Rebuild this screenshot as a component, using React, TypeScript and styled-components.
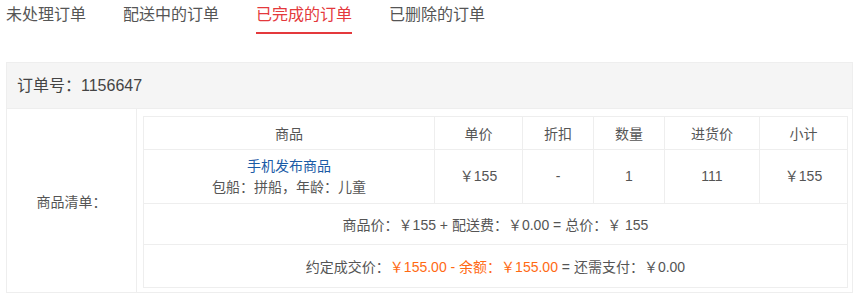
import React, { useState } from "react";
import styled, { createGlobalStyle } from "styled-components";

const GlobalStyle = createGlobalStyle`
  body {
    margin: 0;
    background: #fff;
    font-family: "Liberation Sans", "Noto Sans CJK SC", sans-serif;
    color: #555;
  }
`;

const tabs = ["未处理订单", "配送中的订单", "已完成的订单", "已删除的订单"];

const columns = [
  { title: "商品", width: 291 },
  { title: "单价", width: 88 },
  { title: "折扣", width: 71 },
  { title: "数量", width: 71 },
  { title: "进货价", width: 95 },
  { title: "小计", width: 88 },
];

const App = () => {
  const [active, setActive] = useState(2);

  return (
    <Page>
      <GlobalStyle />
      <TabBar>
        {tabs.map((t, i) => (
          <Tab key={t} $active={i === active} onClick={() => setActive(i)}>
            {t}
          </Tab>
        ))}
      </TabBar>

      <OrderPanel>
        <OrderHeader>订单号：1156647</OrderHeader>
        <OrderBody>
          <Label>商品清单：</Label>
          <TableWrap>
            <GoodsTable>
              <colgroup>
                {columns.map((c) => (
                  <col key={c.title} style={{ width: c.width }} />
                ))}
              </colgroup>
              <thead>
                <tr>
                  {columns.map((c) => (
                    <Th key={c.title}>{c.title}</Th>
                  ))}
                </tr>
              </thead>
              <tbody>
                <ProductRow>
                  <Td>
                    <ProductName href="#">手机发布商品</ProductName>
                    <Spec>包船：拼船，年龄：儿童</Spec>
                  </Td>
                  <Td>￥155</Td>
                  <Td>-</Td>
                  <Td>1</Td>
                  <Td>111</Td>
                  <Td>￥155</Td>
                </ProductRow>
                <SummaryRow>
                  <Td colSpan={6}>
                    商品价：￥155 + 配送费：￥0.00 = 总价：￥ 155
                  </Td>
                </SummaryRow>
                <PayRow>
                  <Td colSpan={6}>
                    约定成交价：<Highlight>￥155.00 - 余额：￥155.00</Highlight> = 还需支付：￥0.00
                  </Td>
                </PayRow>
              </tbody>
            </GoodsTable>
          </TableWrap>
        </OrderBody>
      </OrderPanel>
    </Page>
  );
};

const Page = styled.div`
  width: 859px;
  height: 297px;
  overflow: hidden;
`;

const TabBar = styled.div`
  display: flex;
  gap: 37px;
  padding-left: 6px;
`;

const Tab = styled.div<{ $active: boolean }>`
  font-size: 16px;
  line-height: 22px;
  padding: 4px 0 6px;
  color: ${(p) => (p.$active ? "#e4393c" : "#555")};
  border-bottom: 2px solid ${(p) => (p.$active ? "#e4393c" : "transparent")};
  cursor: pointer;
`;

const OrderPanel = styled.div`
  margin: 28px 6px 0;
  border: 1px solid #eee;
`;

const OrderHeader = styled.div`
  height: 45px;
  line-height: 45px;
  background: #f5f5f5;
  padding-left: 10px;
  font-size: 16px;
  color: #444;
  border-bottom: 1px solid #eee;
`;

const OrderBody = styled.div`
  display: flex;
`;

const Label = styled.div`
  width: 129px;
  flex-shrink: 0;
  display: flex;
  align-items: center;
  justify-content: center;
  font-size: 14px;
  border-right: 1px solid #eee;
`;

const TableWrap = styled.div`
  flex: 1;
  padding: 7px 6px 4px 6px;
`;

const GoodsTable = styled.table`
  width: 100%;
  border-collapse: collapse;
  table-layout: fixed;
  font-size: 14px;
  border: 1px solid #eee;
`;

const Th = styled.th`
  height: 32px;
  padding: 0;
  font-weight: normal;
  color: #555;
  border: 1px solid #eee;
  text-align: center;
`;

const Td = styled.td`
  padding: 0;
  border: 1px solid #eee;
  text-align: center;
  color: #555;
`;

const ProductRow = styled.tr`
  height: 54px;
  line-height: 21px;
`;

const SummaryRow = styled.tr`
  height: 41px;
`;

const PayRow = styled.tr`
  height: 43px;
`;

const ProductName = styled.a`
  display: block;
  color: #1a5ba6;
  text-decoration: none;
`;

const Spec = styled.div`
  color: #555;
`;

const Highlight = styled.span`
  color: #ff6a13;
`;

export default App;
